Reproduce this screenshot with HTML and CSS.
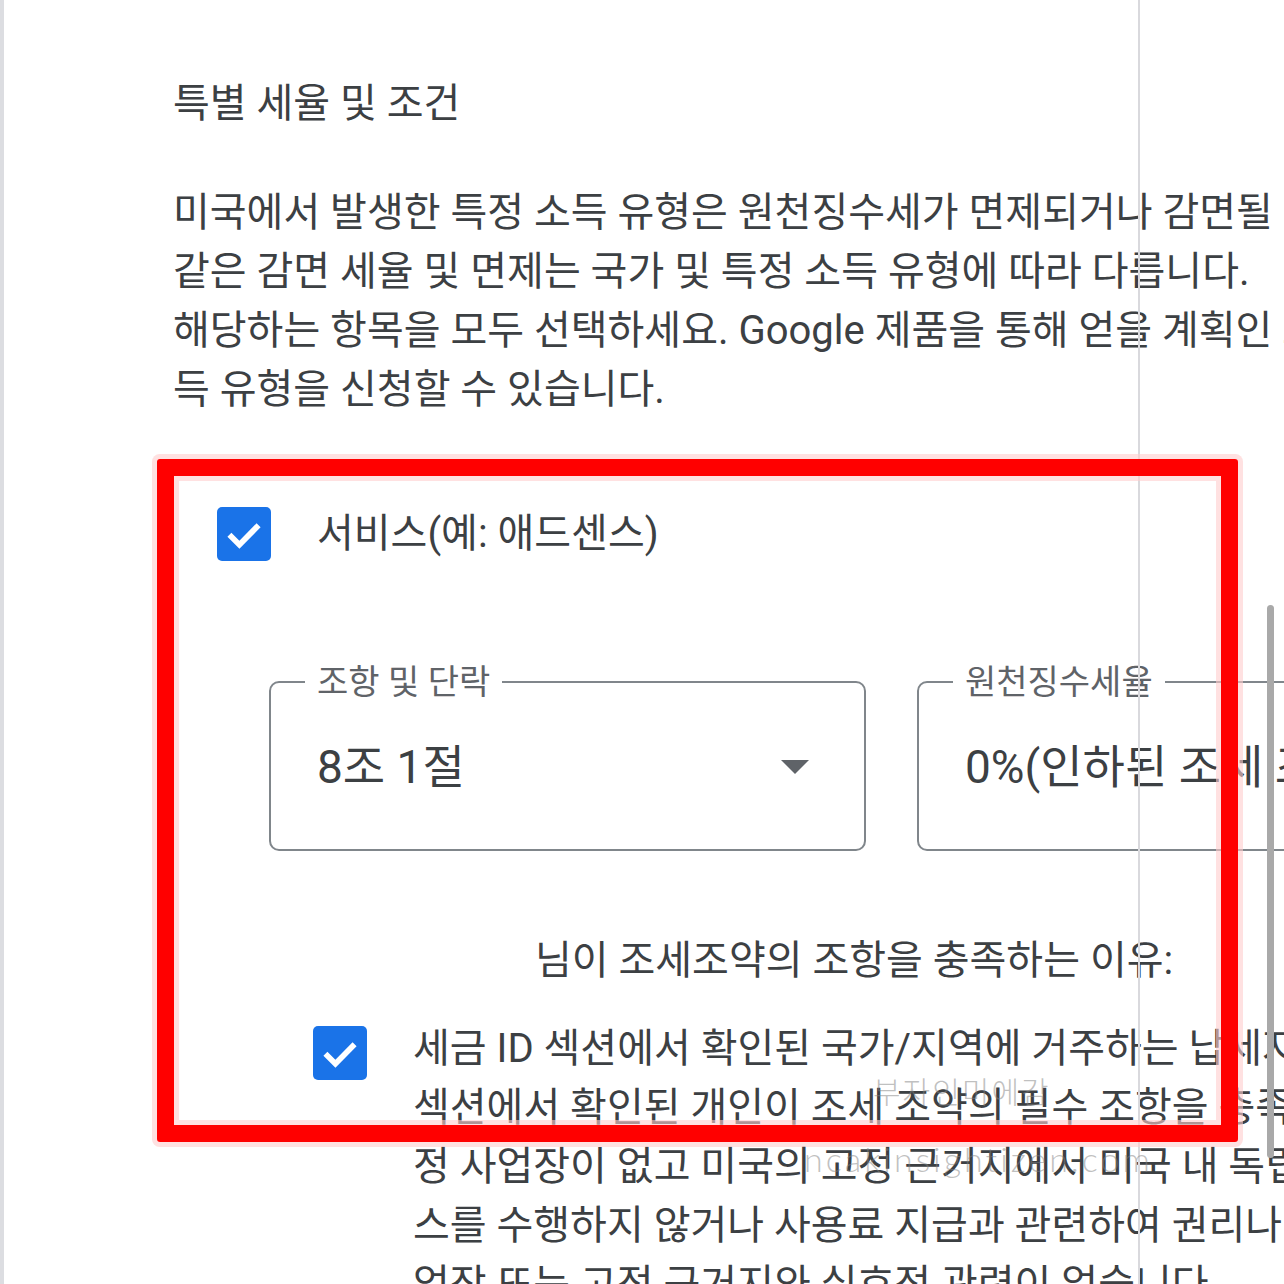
FILE: index.html
```html
<!DOCTYPE html>
<html lang="ko">
<head>
<meta charset="utf-8">
<title>특별 세율 및 조건</title>
<link rel="stylesheet" href="styles.css">
</head>
<body>
<div class="page">
  <div class="content">
    <h2 class="title">특별 세율 및 조건</h2>
    <p class="desc">
      <span class="ln">미국에서 발생한 특정 소득 유형은 원천징수세가 면제되거나 감면될 수 있습니다. 이와</span>
      <span class="ln">같은 감면 세율 및 면제는 국가 및 특정 소득 유형에 따라 다릅니다.</span>
      <span class="ln">해당하는 항목을 모두 선택하세요. Google 제품을 통해 얻을 계획인 소</span>
      <span class="ln">득 유형을 신청할 수 있습니다.</span>
    </p>

    <div class="check-row">
      <span class="cb"><svg viewBox="0 0 24 24" class="tick"><polyline points="5,12.4 9.8,17.2 19,7.8"/></svg></span>
      <span class="cb-label">서비스(예: 애드센스)</span>
    </div>

    <div class="fields">
      <fieldset class="field field-1">
        <legend class="flabel">조항 및 단락</legend>
        <span class="fvalue">8조 1절</span>
        <span class="caret"></span>
      </fieldset>
      <fieldset class="field field-2">
        <legend class="flabel">원천징수세율</legend>
        <span class="fvalue">0%(인하된 조세 조약 세율)</span>
      </fieldset>
    </div>

    <div class="reason">님이 조세조약의 조항을 충족하는 이유:</div>

    <div class="check-row check-row-2">
      <span class="cb"><svg viewBox="0 0 24 24" class="tick"><polyline points="5,12.4 9.8,17.2 19,7.8"/></svg></span>
      <div class="reason-text">
        <span class="ln">세금 ID 섹션에서 확인된 국가/지역에 거주하는 납세자이며, 세금 ID</span>
        <span class="ln">섹션에서 확인된 개인이 조세 조약의 필수 조항을 충족하며, 미국 내 고</span>
        <span class="ln">정 사업장이 없고 미국의 고정 근거지에서 미국 내 독립적인 개인 서비</span>
        <span class="ln">스를 수행하지 않거나 사용료 지급과 관련하여 권리나 재산이 이러한 사</span>
        <span class="ln">업장 또는 고정 근거지와 실효적 관련이 없습니다.</span>
      </div>
    </div>
  </div>

  <div class="vline"></div>
  <div class="scroll-thumb"></div>
  <div class="wm wm-1">부자인미에감</div>
  <div class="wm wm-2">ncakinsightizen.com</div>
  <div class="annot"></div>
</div>
</body>
</html>
```

FILE: styles.css
```css
html, body {
  margin: 0;
  padding: 0;
  background: #ffffff;
}

.page {
  position: relative;
  width: 1284px;
  height: 1284px;
  box-sizing: border-box;
  border-left: 4px solid #dcdde1;
  overflow: hidden;
  font-family: Roboto, "Noto Sans CJK KR", sans-serif;
  color: #3c4043;
}

.content {
  padding: 74px 0 0 169px;
  width: 1800px;
}

.title {
  margin: 0;
  font-size: 40px;
  font-weight: 400;
  line-height: 60px;
  white-space: nowrap;
}

.desc {
  margin: 49px 0 0;
  font-size: 40px;
  line-height: 59px;
}

.ln {
  display: block;
  white-space: nowrap;
}

.check-row {
  display: flex;
  align-items: center;
  gap: 46px;
  margin: 88px 0 0 44px;
}

.cb {
  flex: none;
  width: 54px;
  height: 54px;
  border-radius: 5px;
  background: #1a73e8;
  display: flex;
  align-items: center;
  justify-content: center;
}

.tick {
  width: 50px;
  height: 50px;
  fill: none;
  stroke: #ffffff;
  stroke-width: 2.7;
}

.cb-label {
  font-size: 40px;
  line-height: 54px;
  white-space: nowrap;
}

.fields {
  display: flex;
  gap: 51px;
  margin: 101px 0 0 96px;
}

.field {
  margin: 0;
  box-sizing: border-box;
  border: 2px solid #80868b;
  border-radius: 10px;
  padding: 40px 55px 57px 46px;
  display: flex;
  align-items: center;
  justify-content: space-between;
  min-width: 0;
}

.field-1 {
  width: 597px;
}

.field-2 {
  width: 760px;
}

.flabel {
  margin-left: -12px;
  padding: 0 12px;
  font-size: 34px;
  line-height: 40px;
  color: #5f6368;
  white-space: nowrap;
}

.fvalue {
  font-size: 46px;
  line-height: 50px;
  white-space: nowrap;
}

.caret {
  flex: none;
  width: 0;
  height: 0;
  border-left: 14px solid transparent;
  border-right: 14px solid transparent;
  border-top: 14px solid #5f6368;
}

.reason {
  margin: 80px 0 0 362px;
  font-size: 40px;
  line-height: 60px;
  white-space: nowrap;
}

.check-row-2 {
  align-items: flex-start;
  margin: 28px 0 0 140px;
}

.check-row-2 .cb {
  margin-top: 7px;
}

.reason-text {
  font-size: 40px;
  line-height: 59px;
}

.vline {
  position: absolute;
  top: 0;
  left: 1134px;
  width: 2px;
  height: 100%;
  background: #d9d9dd;
}

.scroll-thumb {
  position: absolute;
  left: 1263px;
  top: 605px;
  width: 7px;
  height: 553px;
  border-radius: 4px;
  background: #a9a9a9;
}

.wm {
  position: absolute;
  font-family: Lato, "Noto Sans CJK KR", sans-serif;
  color: rgba(130, 130, 130, 0.5);
  white-space: nowrap;
  font-weight: 300;
}

.wm-1 {
  left: 869px;
  top: 1068px;
  font-size: 30px;
  letter-spacing: 2px;
}

.wm-2 {
  left: 800px;
  top: 1138px;
  font-size: 34px;
  letter-spacing: 3px;
}

.annot {
  position: absolute;
  left: 153px;
  top: 459px;
  width: 1081px;
  height: 683px;
  box-sizing: border-box;
  border: 17px solid #ff0000;
  border-radius: 3px;
  box-shadow: 0 0 0 5px rgba(255, 205, 205, 0.6), inset 0 0 0 5px rgba(255, 205, 205, 0.6);
}
```
